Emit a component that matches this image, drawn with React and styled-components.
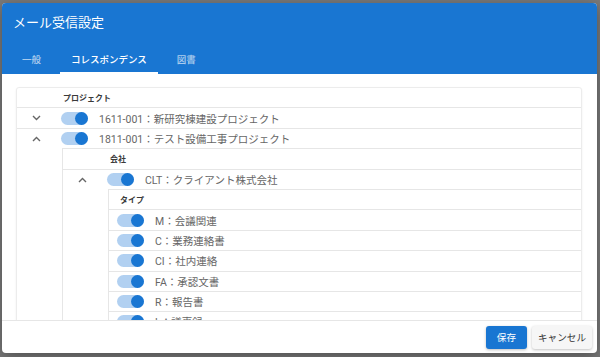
import React from 'react';
import styled, { createGlobalStyle } from 'styled-components';

const GlobalStyle = createGlobalStyle`
  html, body {
    margin: 0;
    padding: 0;
    background: #7a7a7a;
  }
  body {
    font-family: "Roboto", "Noto Sans CJK JP", sans-serif;
  }
`;

const Backdrop = styled.div`
  width: 600px;
  height: 357px;
  padding: 3px 3px 4px 2px;
  box-sizing: border-box;
  overflow: hidden;
`;

const Dialog = styled.div`
  width: 595px;
  height: 350px;
  background: #fff;
  border-radius: 4px;
  overflow: hidden;
  display: flex;
  flex-direction: column;
  box-shadow: 0 4px 16px rgba(0, 0, 0, 0.35);
`;

const Header = styled.div`
  background: #1976d2;
  color: #fff;
  display: flex;
  flex-direction: column;
  flex: none;
`;

const Title = styled.div`
  height: 39px;
  line-height: 39px;
  padding-left: 11px;
  font-size: 13px;
  font-weight: 400;
`;

const Tabs = styled.div`
  display: flex;
  gap: 8px;
  margin-top: 4px;
  padding-left: 9px;
`;

const Tab = styled.div`
  position: relative;
  height: 28px;
  line-height: 28px;
  padding: 0 11px;
  font-size: 9.5px;
  font-weight: 500;
  color: ${p => (p.$active ? '#fff' : 'rgba(255,255,255,0.65)')};
  &::after {
    content: '';
    position: absolute;
    left: 0;
    right: 0;
    bottom: 0;
    height: 2px;
    background: ${p => (p.$active ? '#fff' : 'transparent')};
  }
`;

const Content = styled.div`
  flex: 1;
  overflow: hidden;
  padding: 13px 15px 0 14px;
`;

const Card = styled.div`
  border: 1px solid #ececec;
  border-radius: 3px;
  box-shadow: 0 1px 2px rgba(0, 0, 0, 0.08);
  background: #fff;
`;

const HeadRow = styled.div`
  height: 20.4px;
  box-sizing: border-box;
  display: flex;
  align-items: center;
  padding-left: ${p => p.$indent}px;
  font-size: 8px;
  font-weight: 700;
  color: #3a3a3a;
  border-bottom: 1px solid #e6e6e6;
`;

const Row = styled.div`
  height: 20.4px;
  box-sizing: border-box;
  display: flex;
  align-items: center;
  padding-left: ${p => p.$indent || 0}px;
  border-bottom: ${p => (p.$open ? 'none' : '1px solid #e6e6e6')};
`;

const ChevronCell = styled.div`
  width: 44px;
  flex: none;
  display: flex;
  justify-content: center;
  padding-right: 5px;
  box-sizing: border-box;
`;

const Label = styled.span`
  font-size: 10.5px;
  color: #666;
  margin-left: 11px;
  white-space: nowrap;
`;

const Track = styled.span`
  position: relative;
  width: 27px;
  height: 13px;
  border-radius: 7px;
  background: #b1d0f1;
  flex: none;
`;

const Knob = styled.span`
  position: absolute;
  right: 0;
  top: 0;
  width: 13px;
  height: 13px;
  border-radius: 50%;
  background: #1976d2;
`;

const Detail = styled.div`
  display: flex;
`;

const Spacer = styled.div`
  width: 45px;
  flex: none;
`;

const Nested = styled.div`
  flex: 1;
  border-left: 1px solid #e6e6e6;
  border-top: 1px solid #e6e6e6;
  margin-top: -1px;
`;

const Footer = styled.div`
  flex: none;
  height: 33px;
  border-top: 1px solid #e6e6e6;
  display: flex;
  align-items: center;
  justify-content: flex-end;
  gap: 5px;
  padding-right: 5px;
  box-sizing: border-box;
`;

const Button = styled.button`
  height: 23px;
  padding: 0 ${p => (p.$primary ? '11px' : '6px')};
  border: none;
  border-radius: 3px;
  font-family: inherit;
  font-size: 9.6px;
  background: ${p => (p.$primary ? '#1976d2' : '#f6f6f6')};
  color: ${p => (p.$primary ? '#fff' : '#333')};
  box-shadow: 0 1px 3px rgba(0, 0, 0, 0.25);
`;

const Chevron = ({ up }) => (
  <svg width="9" height="6" viewBox="0 0 9 6">
    <path
      d={up ? 'M1 5 L4.5 1.5 L8 5' : 'M1 1 L4.5 4.5 L8 1'}
      fill="none"
      stroke="#666"
      strokeWidth="1.4"
    />
  </svg>
);

const Toggle = () => (
  <Track>
    <Knob />
  </Track>
);

const types = [
  'M：会議関連',
  'C：業務連絡書',
  'CI：社内連絡',
  'FA：承認文書',
  'R：報告書',
  'L：議事録',
  'O：その他',
];

export default function App() {
  return (
    <>
      <GlobalStyle />
      <Backdrop>
        <Dialog>
          <Header>
            <Title>メール受信設定</Title>
            <Tabs>
              <Tab>一般</Tab>
              <Tab $active>コレスポンデンス</Tab>
              <Tab>図書</Tab>
            </Tabs>
          </Header>
          <Content>
            <Card>
              <HeadRow $indent={46}>プロジェクト</HeadRow>
              <Row>
                <ChevronCell><Chevron /></ChevronCell>
                <Toggle />
                <Label>1611-001：新研究棟建設プロジェクト</Label>
              </Row>
              <Row $open>
                <ChevronCell><Chevron up /></ChevronCell>
                <Toggle />
                <Label>1811-001：テスト設備工事プロジェクト</Label>
              </Row>
              <Detail>
                <Spacer />
                <Nested>
                  <HeadRow $indent={47}>会社</HeadRow>
                  <Row $open>
                    <ChevronCell><Chevron up /></ChevronCell>
                    <Toggle />
                    <Label>CLT：クライアント株式会社</Label>
                  </Row>
                  <Detail>
                    <Spacer />
                    <Nested>
                      <HeadRow $indent={11}>タイプ</HeadRow>
                      {types.map(t => (
                        <Row key={t} $indent={8}>
                          <Toggle />
                          <Label>{t}</Label>
                        </Row>
                      ))}
                    </Nested>
                  </Detail>
                </Nested>
              </Detail>
            </Card>
          </Content>
          <Footer>
            <Button $primary>保存</Button>
            <Button>キャンセル</Button>
          </Footer>
        </Dialog>
      </Backdrop>
    </>
  );
}
